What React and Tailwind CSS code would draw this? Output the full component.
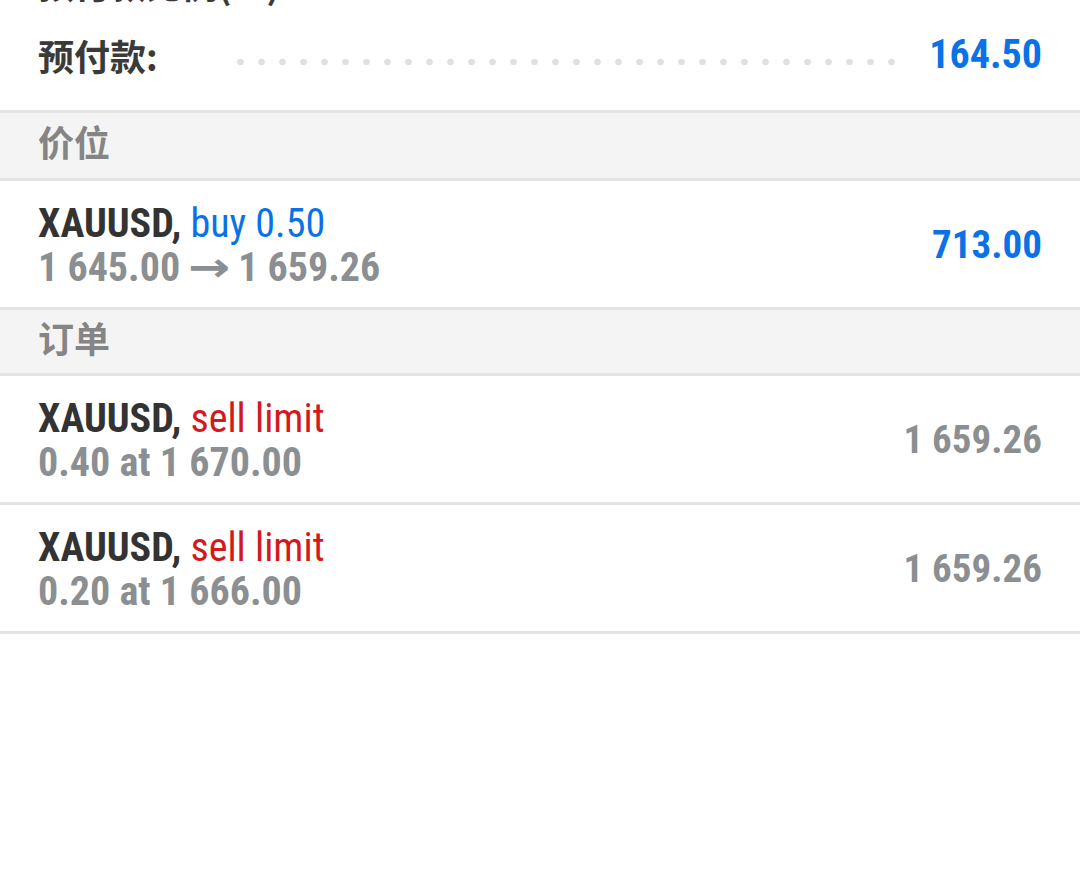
const LATIN = "font-['Roboto_Condensed','Liberation_Sans_Narrow','DejaVu_Sans_Condensed','Roboto',sans-serif]";
const CJK = "font-['Noto_Sans_CJK_SC','Noto_Sans',sans-serif]";

const SUMMARY = [
  { label: '预付款比例(%)', value: '3 579.26', color: 'text-[#4cc9de]' },
  { label: '预付款:', value: '164.50', color: 'text-[#0a72e6]' },
];

const ORDERS = [
  { symbol: 'XAUUSD', type: 'sell limit', detail: '0.40 at 1 670.00', price: '1 659.26' },
  { symbol: 'XAUUSD', type: 'sell limit', detail: '0.20 at 1 666.00', price: '1 659.26' },
];

function SummaryRow({ label, value, color }) {
  return (
    <div className="flex items-center h-[72px] pl-[38px] pr-[38px]">
      <span className={`${CJK} text-[36px] font-bold text-[#3a3a3a] whitespace-nowrap leading-none`}>{label}</span>
      <div className="flex-1 h-[8px] mt-[14px] ml-[72px] mr-[32px] bg-[radial-gradient(circle,#e0e0e0_3px,transparent_3.6px)] bg-[length:21px_8px] bg-repeat-x bg-left" />
      <span className={`${LATIN} text-[40px] font-bold leading-none ${color}`}>{value}</span>
    </div>
  );
}

function SectionHeader({ title, height }) {
  return (
    <div className={`${height} flex items-center px-[38px] pb-[9px] bg-[#f4f4f4] border-b-[3px] border-[#e4e4e4]`}>
      <span className={`${CJK} text-[36px] font-bold text-[#858585] leading-none`}>{title}</span>
    </div>
  );
}

function TradeRow({ symbol, type, typeColor, detail, price, priceColor }) {
  return (
    <div className="h-[129px] flex items-center justify-between px-[38px] pt-[3px] border-b-[3px] border-[#e4e4e4]">
      <div className={`${LATIN} flex flex-col leading-[44px] text-[40px] font-bold`}>
        <div className="text-[#333333]">
          {symbol}, <span className={`font-normal ${typeColor}`}>{type}</span>
        </div>
        <div className="text-[#8b8f92]">{detail}</div>
      </div>
      <span className={`${LATIN} text-[39px] font-bold ${priceColor}`}>{price}</span>
    </div>
  );
}

export default function App() {
  return (
    <div className="w-[1080px] h-[884px] bg-white overflow-hidden">
      <div className="-mt-[53px] pb-[19px] border-b-[3px] border-[#e4e4e4]">
        {SUMMARY.map(row => <SummaryRow key={row.label} {...row} />)}
      </div>
      <SectionHeader title="价位" height="h-[68px]" />
      <TradeRow
        symbol="XAUUSD"
        type="buy 0.50"
        typeColor="text-[#0a72e6]"
        detail={
          <>
            1 645.00<span className="inline-block w-[58px] text-center"><span className="inline-block scale-x-[1.4]">→</span></span>1 659.26
          </>
        }
        price="713.00"
        priceColor="text-[#0a72e6]"
      />
      <SectionHeader title="订单" height="h-[66px]" />
      {ORDERS.map((o, i) => (
        <TradeRow key={i} {...o} typeColor="text-[#d3191c]" priceColor="text-[#8b8f92]" />
      ))}
    </div>
  );
}
